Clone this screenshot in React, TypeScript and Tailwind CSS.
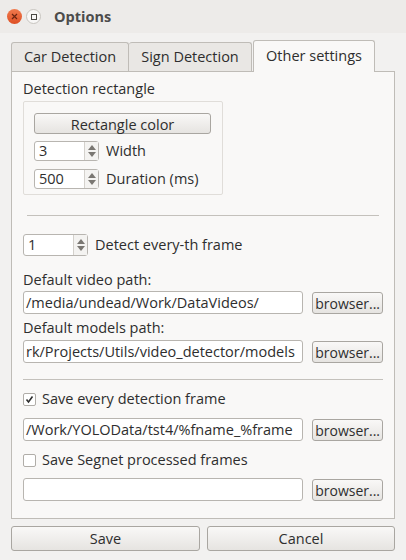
import React from 'react';

const font = { fontFamily: '"Open Sans", "Noto Sans", sans-serif' };

const SpinBox: React.FC<{ value: string; h?: string }> = ({ value, h = 'h-[20px]' }) => (
    <div className={`flex w-[65px] ${h} items-stretch rounded-[3px] border border-[#b8b5b0] bg-white`}>
        <div className="flex flex-1 items-center pl-[4px] text-[14.5px] text-[#2e2e2e]">{value}</div>
        <div className="flex w-[14px] flex-col items-center justify-center border-l border-[#d4d1cc] bg-[#f4f3f1] leading-none">
            <svg width="8" height="5" viewBox="0 0 8 5"><path d="M0 5 L4 0 L8 5 Z" fill="#7a7772" /></svg>
            <svg width="8" height="5" viewBox="0 0 8 5" className="mt-[2px]"><path d="M0 0 L4 5 L8 0 Z" fill="#7a7772" /></svg>
        </div>
    </div>
);

const PathRow: React.FC<{ value: string }> = ({ value }) => (
    <div className="flex items-center">
        <div className="flex h-[23px] w-[281px] items-center overflow-hidden whitespace-nowrap rounded-[3px] border border-[#b8b5b0] bg-white pl-[2px] text-[14.5px] text-[#2e2e2e]">
            {value}
        </div>
        <button className="ml-[9px] h-[22px] w-[71px] rounded-[3px] border border-[#a9a6a1] bg-gradient-to-b from-[#f9f8f7] to-[#e6e4e1] text-[14px] text-[#2e2e2e]">
            browser...
        </button>
    </div>
);

const CheckRow: React.FC<{ label: string; checked?: boolean }> = ({ label, checked }) => (
    <div className="flex h-[20px] items-center">
        <div className="flex h-[13px] w-[13px] items-center justify-center rounded-[2px] border border-[#b0ada8] bg-white">
            {checked && (
                <svg width="9" height="9" viewBox="0 0 9 9"><path d="M1.5 4.5 L3.5 7 L7.5 1.5" stroke="#2e2e2e" strokeWidth="1.6" fill="none" /></svg>
            )}
        </div>
        <span className="ml-[6px] text-[14.5px] text-[#2e2e2e]">{label}</span>
    </div>
);

export default function App() {
    return (
        <div className="flex h-[560px] w-[406px] flex-col bg-[#f2f1f0] text-[#2e2e2e]" style={font}>
            <div className="flex h-[33px] items-center bg-[#edebe9] pl-[7px]">
                <div className="flex h-[15px] w-[15px] items-center justify-center rounded-full bg-gradient-to-b from-[#f07a4d] to-[#de4f23]">
                    <svg width="7" height="7" viewBox="0 0 7 7"><path d="M1 1 L6 6 M6 1 L1 6" stroke="#6b2410" strokeWidth="1.2" /></svg>
                </div>
                <div className="ml-[4px] flex h-[15px] w-[15px] items-center justify-center rounded-full border border-[#c8c5c0] bg-[#f8f7f6]">
                    <div className="h-[6px] w-[6px] border border-[#4a4844]" />
                </div>
                <span className="ml-[13px] text-[14.5px] font-bold text-[#4c4c4c]">Options</span>
            </div>

            <div className="mt-[7px] flex items-end pl-[11px]">
                <div className="flex h-[29px] w-[118px] items-center justify-center rounded-t-[3px] border border-b-0 border-[#bfbcb7] bg-[#e9e7e4] text-[14.5px]">Car Detection</div>
                <div className="flex h-[29px] w-[123px] items-center justify-center rounded-t-[3px] border border-b-0 border-l-0 border-[#bfbcb7] bg-[#e9e7e4] text-[14.5px]">Sign Detection</div>
                <div className="relative z-10 -mb-px ml-[1px] flex h-[32px] w-[122px] items-center justify-center rounded-t-[3px] border border-b-0 border-[#bfbcb7] bg-[#f9f8f7] pb-[2px] text-[14.5px]">Other settings</div>
            </div>

            <div className="mx-[11px] flex h-[448px] flex-col border border-[#bfbcb7] bg-[#f9f8f7] pl-[11px] pr-[11px]">
                <div className="mt-[7px] text-[14.5px] leading-[20px]">Detection rectangle</div>
                <div className="mt-[2px] flex h-[94px] w-[200px] flex-col rounded-[2px] border border-[#e0ddd9] px-[10px] pt-[11px]">
                    <button className="h-[21px] w-[177px] rounded-[3px] border border-[#a9a6a1] bg-gradient-to-b from-[#f9f8f7] to-[#e6e4e1] text-[14.5px]">Rectangle color</button>
                    <div className="mt-[6px] flex items-center">
                        <SpinBox value="3" />
                        <span className="ml-[7px] text-[14.5px]">Width</span>
                    </div>
                    <div className="mt-[6px] flex items-center">
                        <SpinBox value="500" />
                        <span className="ml-[7px] text-[14.5px]">Duration (ms)</span>
                    </div>
                </div>

                <div className="mx-[4px] mt-[20px] h-px bg-[#c4c1bc]" />

                <div className="mt-[18px] flex items-center">
                    <SpinBox value="1" h="h-[22px]" />
                    <span className="ml-[7px] text-[14.5px]">Detect every-th frame</span>
                </div>

                <div className="mt-[14px] text-[14.5px] leading-[20px]">Default video path:</div>
                <div className="mt-[1px]"><PathRow value="/media/undead/Work/DataVideos/" /></div>

                <div className="mt-[4px] text-[14.5px] leading-[20px]">Default models path:</div>
                <div className="mt-[2px]"><PathRow value="rk/Projects/Utils/video_detector/models" /></div>

                <div className="mt-[16px] h-px bg-[#c4c1bc]" />

                <div className="mt-[9px]"><CheckRow label="Save every detection frame" checked /></div>
                <div className="mt-[9px]"><PathRow value="/Work/YOLOData/tst4/%fname_%frame" /></div>
                <div className="mt-[9px]"><CheckRow label="Save Segnet processed frames" /></div>
                <div className="mt-[8px]"><PathRow value="" /></div>
            </div>

            <div className="mt-[7px] flex px-[11px]">
                <button className="h-[25px] w-[189px] rounded-[3px] border border-[#a9a6a1] bg-gradient-to-b from-[#f9f8f7] to-[#e6e4e1] text-[14.5px]">Save</button>
                <button className="ml-[7px] h-[25px] w-[188px] rounded-[3px] border border-[#a9a6a1] bg-gradient-to-b from-[#f9f8f7] to-[#e6e4e1] text-[14.5px]">Cancel</button>
            </div>
        </div>
    );
}
